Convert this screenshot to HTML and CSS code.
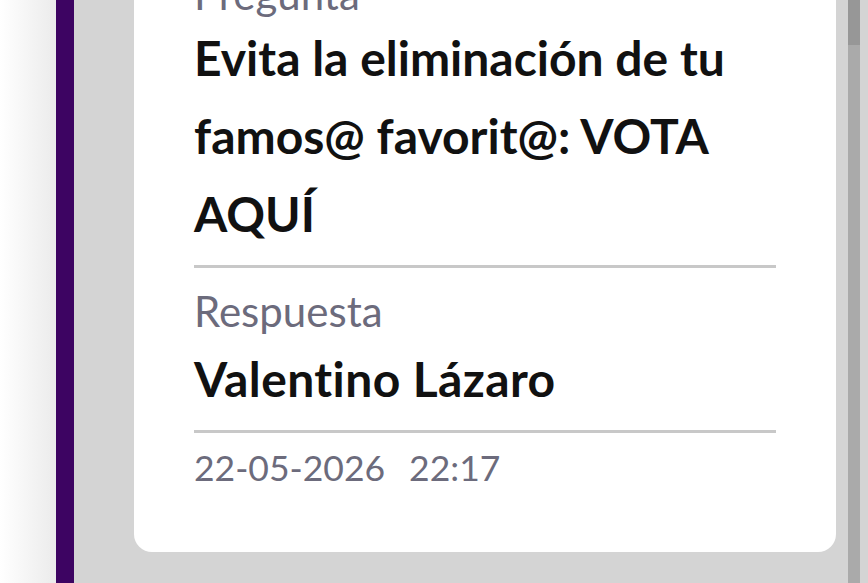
FILE: index.html
```html
<!DOCTYPE html>
<html lang="es">
<head>
<meta charset="utf-8">
<link rel="stylesheet" href="styles.css">
</head>
<body>
<div class="shade"></div>
<div class="accent"></div>
<main class="main">
  <section class="card">
    <div class="label">Pregunta</div>
    <div class="value question">Evita la eliminación de tu famos@ favorit@: VOTA AQUÍ</div>
    <hr class="divider">
    <div class="label label-answer">Respuesta</div>
    <div class="value answer">Valentino Lázaro</div>
    <hr class="divider divider-last">
    <div class="date"><span class="day">22-05-2026</span><span class="time">22:17</span></div>
  </section>
</main>
<div class="scrollbar"><div class="thumb"></div></div>
<div class="edge"></div>
</body>
</html>
```
FILE: styles.css
```css
html, body {
  margin: 0;
  padding: 0;
}
body {
  display: flex;
  width: 868px;
  height: 583px;
  overflow: hidden;
  font-family: Lato, "Noto Sans", sans-serif;
  font-variant-ligatures: none;
  background: #d4d4d4;
}
.shade {
  width: 56px;
  flex: none;
  background: linear-gradient(to right, #ffffff, #ebebeb);
}
.accent {
  width: 18px;
  flex: none;
  background: #3d0462;
}
.main {
  flex: 1;
  display: flex;
  flex-direction: column;
  justify-content: flex-end;
  padding: 0 12px 31px 60px;
  overflow: hidden;
  background: #d4d4d4;
}
.card {
  flex: none;
  background: #fff;
  border-radius: 18px;
  padding: 40px 60px 60px;
}
.label {
  color: #6c6b7c;
  font-size: 42px;
  line-height: 50px;
}
.label-answer {
  margin-bottom: 14px;
}
.value {
  color: #111;
  font-weight: 700;
  font-size: 48px;
}
.question {
  line-height: 78px;
  margin-bottom: 12px;
}
.answer {
  line-height: 58px;
  margin-bottom: 22px;
  letter-spacing: 0.4px;
}
.divider {
  border: 0;
  height: 3px;
  background: #c8c8c8;
  margin: 0 0 18px;
}
.divider-last {
  margin-bottom: 11px;
}
.date {
  color: #6c6b7c;
  font-size: 35.5px;
  line-height: 48px;
}
.time {
  margin-left: 24px;
}
.scrollbar {
  width: 12px;
  flex: none;
  background: #aaaaaa;
}
.thumb {
  height: 45px;
  background: #979797;
}
.edge {
  width: 8px;
  flex: none;
  background: #d4d4d4;
}
```
